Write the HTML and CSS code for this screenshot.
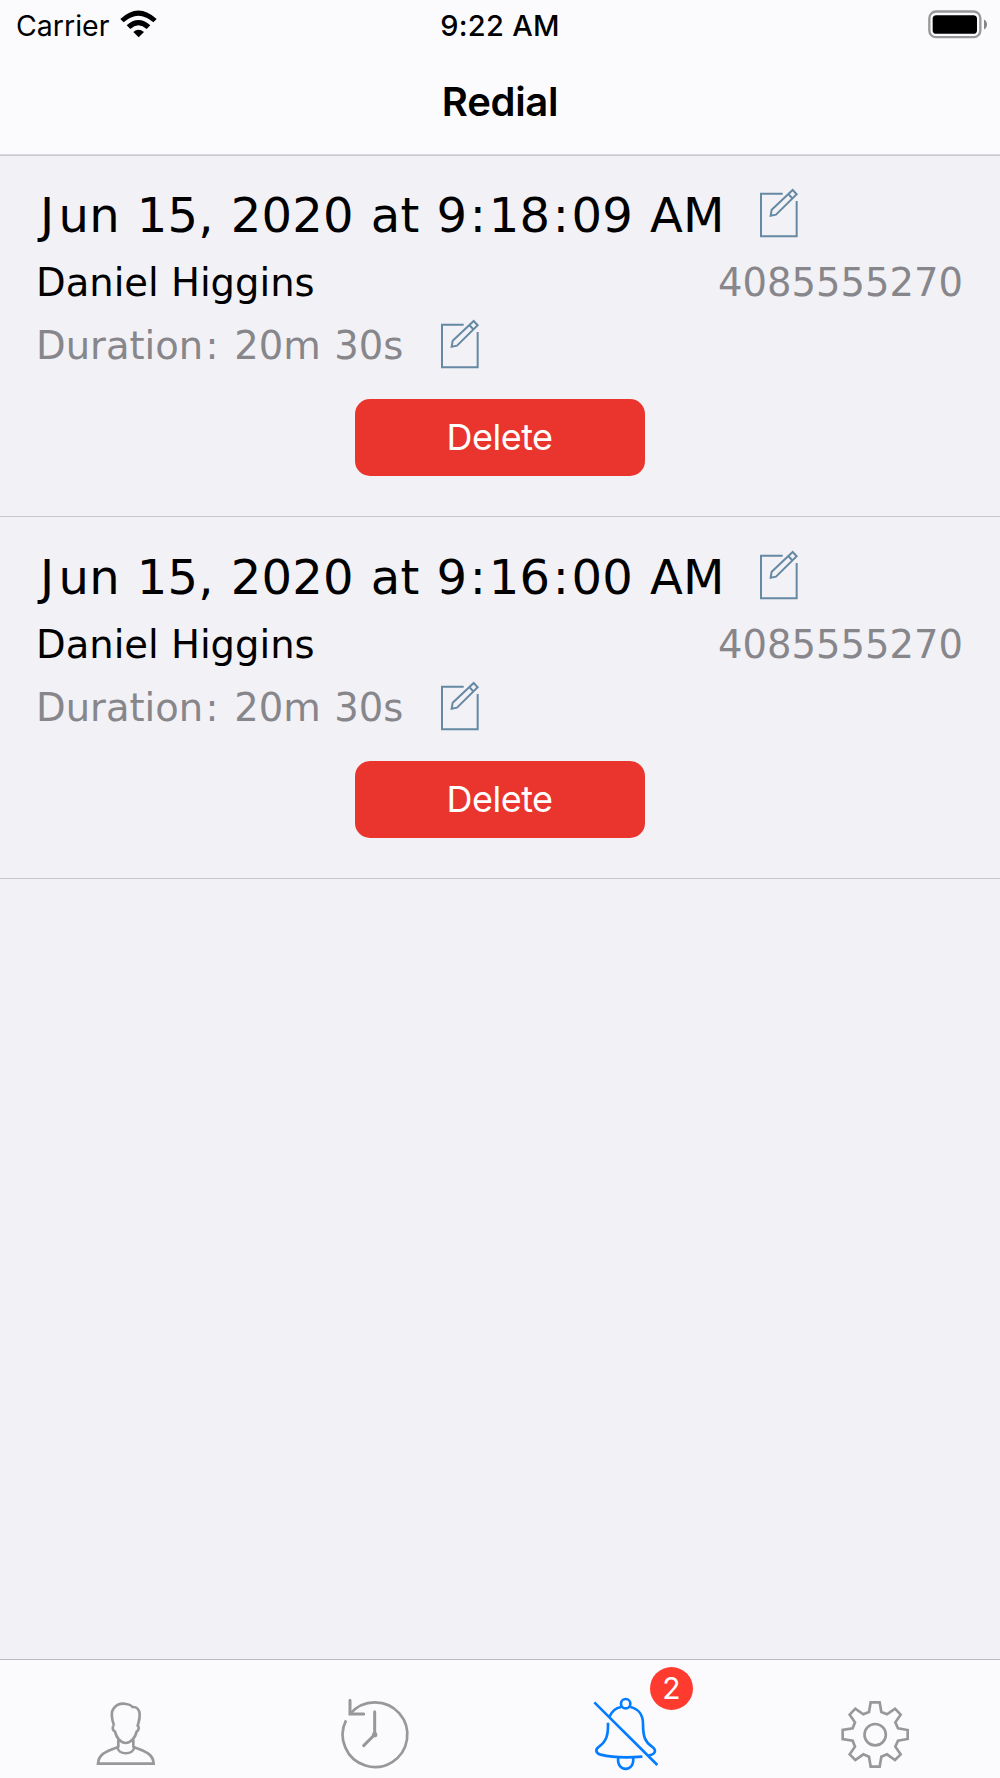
FILE: index.html
```html
<!DOCTYPE html>
<html lang="en">
<head>
    <meta charset="UTF-8">
    <meta name="viewport" content="width=device-width, initial-scale=1.0">
    <title>Redial</title>
    <link rel="stylesheet" href="styles.css">
</head>
<body>
    <!-- Shared edit icon -->
    <svg class="defs" width="0" height="0">
        <symbol id="edit" viewBox="1320 444 120 150">
            <path d="M1391 461H1326V589H1433V483"/>
            <path d="M1355 527L1358 509L1421 450L1433 463L1371 524ZM1408 462L1420 475"/>
        </symbol>
    </svg>

    <header>
        <div class="status-bar">
            <div class="carrier">
                <span>Carrier</span>
                <svg class="wifi" viewBox="360 29 111 84">
                    <path d="M361 56Q415 5 470 56L460 66Q415 27 371 66Z"/>
                    <path d="M380 75Q415 43 451 75L440 86Q415 64 391 86Z"/>
                    <path d="M400 95Q415 81 432 95L416 111Z"/>
                </svg>
            </div>
            <div class="time">9:22 AM</div>
            <div class="status-right">
                <svg class="battery" viewBox="84 29 180 86">
                    <rect class="shell" x="88" y="33" width="153" height="77" rx="20"/>
                    <rect x="98" y="44" width="133" height="56" rx="11"/>
                    <path class="nub" d="M252 57Q261 62 261 72T252 87Z"/>
                </svg>
            </div>
        </div>
        <h1>Redial</h1>
    </header>

    <main>
        <div class="call">
            <div class="line date-line">
                <span class="date"><span class="initial">J</span>un 15, 2020 at 9<span class="colon">:</span>18<span class="colon">:</span>09 AM</span>
                <svg class="edit"><use href="#edit"/></svg>
            </div>
            <div class="line name-line">
                <span class="name">Daniel Higgins</span>
                <span class="phone">4085555270</span>
            </div>
            <div class="line duration-line">
                <span class="duration">Duration<span class="colon">:</span> 20m 30s</span>
                <svg class="edit"><use href="#edit"/></svg>
            </div>
            <button class="delete">Delete</button>
        </div>
        <div class="call">
            <div class="line date-line">
                <span class="date"><span class="initial">J</span>un 15, 2020 at 9<span class="colon">:</span>16<span class="colon">:</span>00 AM</span>
                <svg class="edit"><use href="#edit"/></svg>
            </div>
            <div class="line name-line">
                <span class="name">Daniel Higgins</span>
                <span class="phone">4085555270</span>
            </div>
            <div class="line duration-line">
                <span class="duration">Duration<span class="colon">:</span> 20m 30s</span>
                <svg class="edit"><use href="#edit"/></svg>
            </div>
            <button class="delete">Delete</button>
        </div>
    </main>

    <nav class="tab-bar">
        <!-- Contacts -->
        <a class="tab">
            <svg viewBox="69 165 252 249">
                <path d="M162 257C155 236 151 217 161 205C171 192 188 190 199 192C208 193 214 196 218 201C231 200 238 210 239 222C240 236 236 246 233 257C238 260 237 271 230 275C226 292 213 309 197 309C181 309 169 292 165 275C157 271 156 260 162 257"/>
                <path d="M175 298V320C150 333 116 336 114 371H281C279 336 245 333 220 320V298M172 321C174 346 221 346 223 321"/>
            </svg>
        </a>
        <!-- History -->
        <a class="tab">
            <svg viewBox="71 165 252 249">
                <path d="M110 241A97 97 0 1 0 196 187A97 97 0 0 0 122 222"/>
                <path class="thick" d="M122 181V222H163M196 215V284L163 317"/>
                <circle class="dot" cx="196" cy="284" r="8"/>
            </svg>
        </a>
        <!-- Redial -->
        <a class="tab active">
            <svg viewBox="39 165 252 249">
                <circle cx="167" cy="191" r="14"/>
                <path d="M118 231C126 212 142 203 153 201M181 201C204 206 219 224 219 251C219 292 226 306 245 319C261 330 257 343 236 346"/>
                <path d="M114 248C115 286 109 304 88 319C75 328 76 339 92 344C124 352 178 353 217 350"/>
                <path d="M145 352C137 398 197 398 189 352M73 187L262 375"/>
            </svg>
            <span class="badge">2</span>
        </a>
        <!-- Settings -->
        <a class="tab">
            <svg viewBox="69 165 252 249">
                <path d="M182 187H209L214 216L231 223L255 206L272 224L256 247L264 265L293 270V297L264 302L256 320L272 343L255 360L231 343L214 350L209 380H182L177 350L160 343L136 360L119 343L135 320L128 302L98 297V270L128 265L135 247L119 224L136 206L160 223L177 216Z"/>
                <circle cx="195.500" cy="284" r="32"/>
            </svg>
        </a>
    </nav>
</body>
</html>
```

FILE: styles.css
```css
* { box-sizing: border-box; }
body { margin: 0; height: 1778px; display: flex; flex-direction: column; background: #f2f1f6; color: #000; font-family: Inter, "Liberation Sans", sans-serif; }
.defs { position: absolute; }

/* Header */
header { height: 155px; background: #fbfbfd; border-bottom: 1px solid #d9d8dc; box-shadow: 0 1px 0 #cbcacf; }
.status-bar { display: grid; grid-template-columns: 1fr auto 1fr; height: 51px; line-height: 52px; padding: 0 12px 0 16px; font-size: 29px; }
.carrier { display: flex; }
.carrier span { width: 104px; font-size: 28.500px; white-space: nowrap; }
.wifi { width: 37px; height: 28px; margin-top: 10px; }
.time { margin: 0 2px 0 -2px; font-weight: 500; letter-spacing: 0.3px; }
.status-right { display: flex; justify-content: flex-end; }
.battery { width: 60px; height: 29px; margin-top: 10px; }
.shell { fill: none; stroke: #98989a; stroke-width: 7; }
.nub { fill: #858587; }
h1 { margin: 0; text-align: center; font-size: 40px; line-height: 102px; font-weight: 600; letter-spacing: -0.3px; }

/* Call rows */
main { flex: 1; }
.call { height: 362px; padding: 31px 37px 0 36px; border-bottom: 1px solid #c8c7cc; font-family: "DejaVu Sans", sans-serif; }
.line { display: flex; font-size: 38.500px; white-space: nowrap; }
.date-line { height: 58px; line-height: 58px; font-size: 48px; }
.name-line { height: 76px; line-height: 78px; justify-content: space-between; }
.duration-line { height: 49px; line-height: 51px; }
.date { width: 722.500px; letter-spacing: 0.2px; word-spacing: 1.6px; }
.initial { padding: 0 4.200px 0 4px; }
.colon { padding: 0 2.500px; }
.duration { width: 404px; word-spacing: 1.4px; }
.duration .colon { padding: 0 2.200px; }
.phone, .duration { color: #87868b; }
.edit { width: 40px; height: 50px; margin-top: 2px; fill: none; stroke: #6689a3; stroke-width: 6; }
.duration-line .edit { margin-top: -1.500px; }
.delete { display: block; width: 290px; height: 77px; margin: 30px auto 0; padding: 0 0 2px; border: 0; border-radius: 15px; background: #e9352d; color: #fff; font: 400 36px Inter, "Liberation Sans", sans-serif; letter-spacing: -0.5px; }

/* Tab bar */
.tab-bar { display: grid; grid-template-columns: repeat(4, 1fr); height: 119px; padding-top: 35px; background: #fbfbfd; border-top: 1px solid #b9b8bc; }
.tab { position: relative; display: flex; justify-content: center; }
.tab svg { width: 84px; height: 83px; fill: none; stroke: #98989a; stroke-width: 8; }
.tab .thick { stroke-width: 9; stroke-linecap: round; }
.tab .dot { fill: #98989a; stroke: none; }
.tab.active svg { stroke: #047cff; }
.badge { position: absolute; left: 150px; top: -28px; width: 43px; height: 43px; border-radius: 50%; background: #ff3b30; color: #fff; font-size: 30px; line-height: 43px; text-align: center; }
```
